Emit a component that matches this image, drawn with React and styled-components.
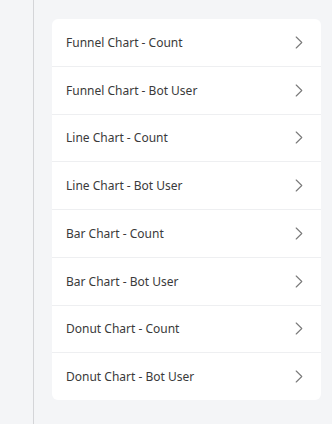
import React from "react"
import styled, { createGlobalStyle } from "styled-components"

const GlobalStyle = createGlobalStyle`
    html, body {
        margin: 0;
        padding: 0;
        background: #f4f5f7;
        font-family: "Noto Sans", "Open Sans", sans-serif;
    }
`

const charts = [
    "Funnel Chart - Count",
    "Funnel Chart - Bot User",
    "Line Chart - Count",
    "Line Chart - Bot User",
    "Bar Chart - Count",
    "Bar Chart - Bot User",
    "Donut Chart - Count",
    "Donut Chart - Bot User",
]

const Chevron = () => (
    <svg width="8" height="13" viewBox="0 0 8 13" fill="none">
        <path d="M1.2 1 L6.8 6.5 L1.2 12" stroke="#7a7a7a" strokeWidth="1.1" strokeLinecap="round" strokeLinejoin="round" />
    </svg>
)

export default function App() {
    return (
        <Page>
            <GlobalStyle />
            <Rail />
            <Main>
                <Card>
                    {charts.map((name, i) => (
                        <Row key={name} last={i === charts.length - 1}>
                            <Label>{name}</Label>
                            <Chevron />
                        </Row>
                    ))}
                </Card>
            </Main>
        </Page>
    )
}

const Page = styled.div`
    display: flex;
    width: 332px;
    height: 424px;
    overflow: hidden;
`

const Rail = styled.div`
    width: 33px;
    flex-shrink: 0;
    border-right: 1px solid #d4d5d8;
`

const Main = styled.div`
    flex: 1;
    padding: 19px 11px 0 18px;
`

const Card = styled.div`
    background: #ffffff;
    border-radius: 6px;
    overflow: hidden;
`

const Row = styled.div`
    display: flex;
    align-items: center;
    justify-content: space-between;
    height: 46.75px;
    padding: 0 18px 0 14px;
    border-bottom: ${p => p.last ? "none" : "1px solid #eeeff1"};
`

const Label = styled.span`
    font-size: 12px;
    color: #3a3a3a;
`
